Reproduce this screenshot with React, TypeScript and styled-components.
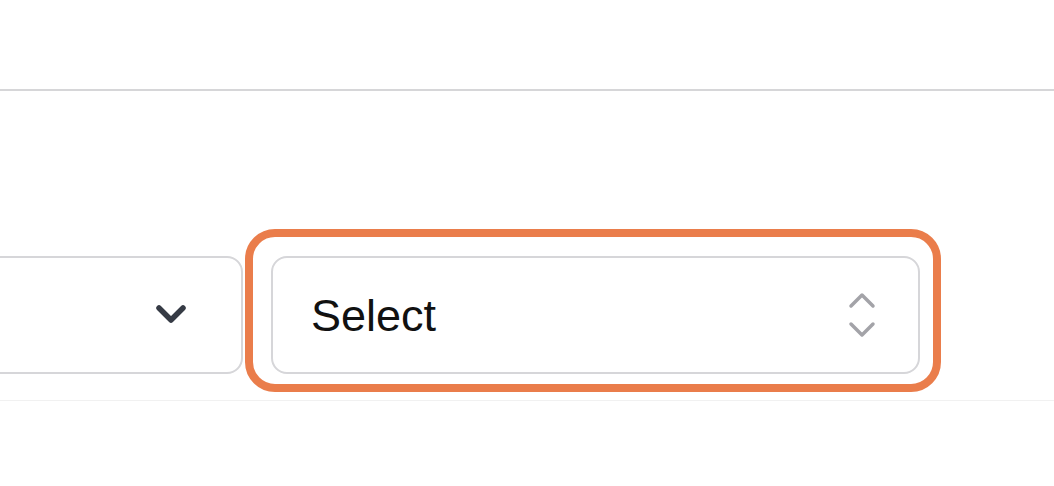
import React from 'react';
import styled, {createGlobalStyle} from 'styled-components';

const Global = createGlobalStyle`
  html, body {
    margin: 0;
    padding: 0;
    background: #ffffff;
  }
  body {
    font-family: "Liberation Sans", Arial, sans-serif;
  }
`;

const Page = styled.div`
  width: 1054px;
  height: 486px;
  overflow: hidden;
  background: #ffffff;
`;

const TopBar = styled.div`
  height: 89px;
  border-bottom: 2px solid #d6d6d8;
`;

const Section = styled.div`
  padding: 138px 0 8px;
  border-bottom: 1px solid #f1f1f1;
`;

const Row = styled.div`
  display: flex;
  align-items: flex-start;
  gap: 2px;
`;

const Field = styled.div<{ $width: number; $shift?: number; $iconPad: number }>`
  box-sizing: border-box;
  flex: none;
  width: ${p => p.$width}px;
  height: 118px;
  margin-left: ${p => p.$shift || 0}px;
  display: flex;
  align-items: center;
  justify-content: space-between;
  padding: 0 ${p => p.$iconPad}px 0 38px;
  border: 2px solid #d6d6d9;
  border-radius: 16px;
  background: #ffffff;
  font-size: 45px;
  color: #111111;
`;

const Left = styled.div`
  margin-top: 27px;
`;

const Ring = styled.div`
  box-sizing: border-box;
  flex: none;
  width: 696px;
  height: 163px;
  padding: 19px 13px 10px 18px;
  border: 8px solid #ea7d4b;
  border-radius: 30px;
`;

const Label = styled.span`
  line-height: 1;
`;

function ChevronDown() {
  return (
    <svg width="32" height="22" viewBox="0 0 32 22" fill="none">
      <path d="M4 4 L16 16 L28 4" stroke="#363b45" strokeWidth="5.5" strokeLinecap="round" strokeLinejoin="round"/>
    </svg>
  );
}

function ChevronUpDown() {
  return (
    <svg width="28" height="46" viewBox="0 0 28 46" fill="none">
      <path d="M3 14 L14 3 L25 14" stroke="#a3a3a8" strokeWidth="3.5" strokeLinecap="round" strokeLinejoin="round"/>
      <path d="M3 32 L14 43 L25 32" stroke="#a3a3a8" strokeWidth="3.5" strokeLinecap="round" strokeLinejoin="round"/>
    </svg>
  );
}

export default function App() {
  return (
    <Page>
      <Global/>
      <TopBar/>
      <Section>
        <Row>
          <Left>
            <Field $width={300} $shift={-57} $iconPad={54}>
              <span/>
              <ChevronDown/>
            </Field>
          </Left>
          <Ring>
            <Field $width={649} $iconPad={42}>
              <Label>Select</Label>
              <ChevronUpDown/>
            </Field>
          </Ring>
        </Row>
      </Section>
    </Page>
  );
}
